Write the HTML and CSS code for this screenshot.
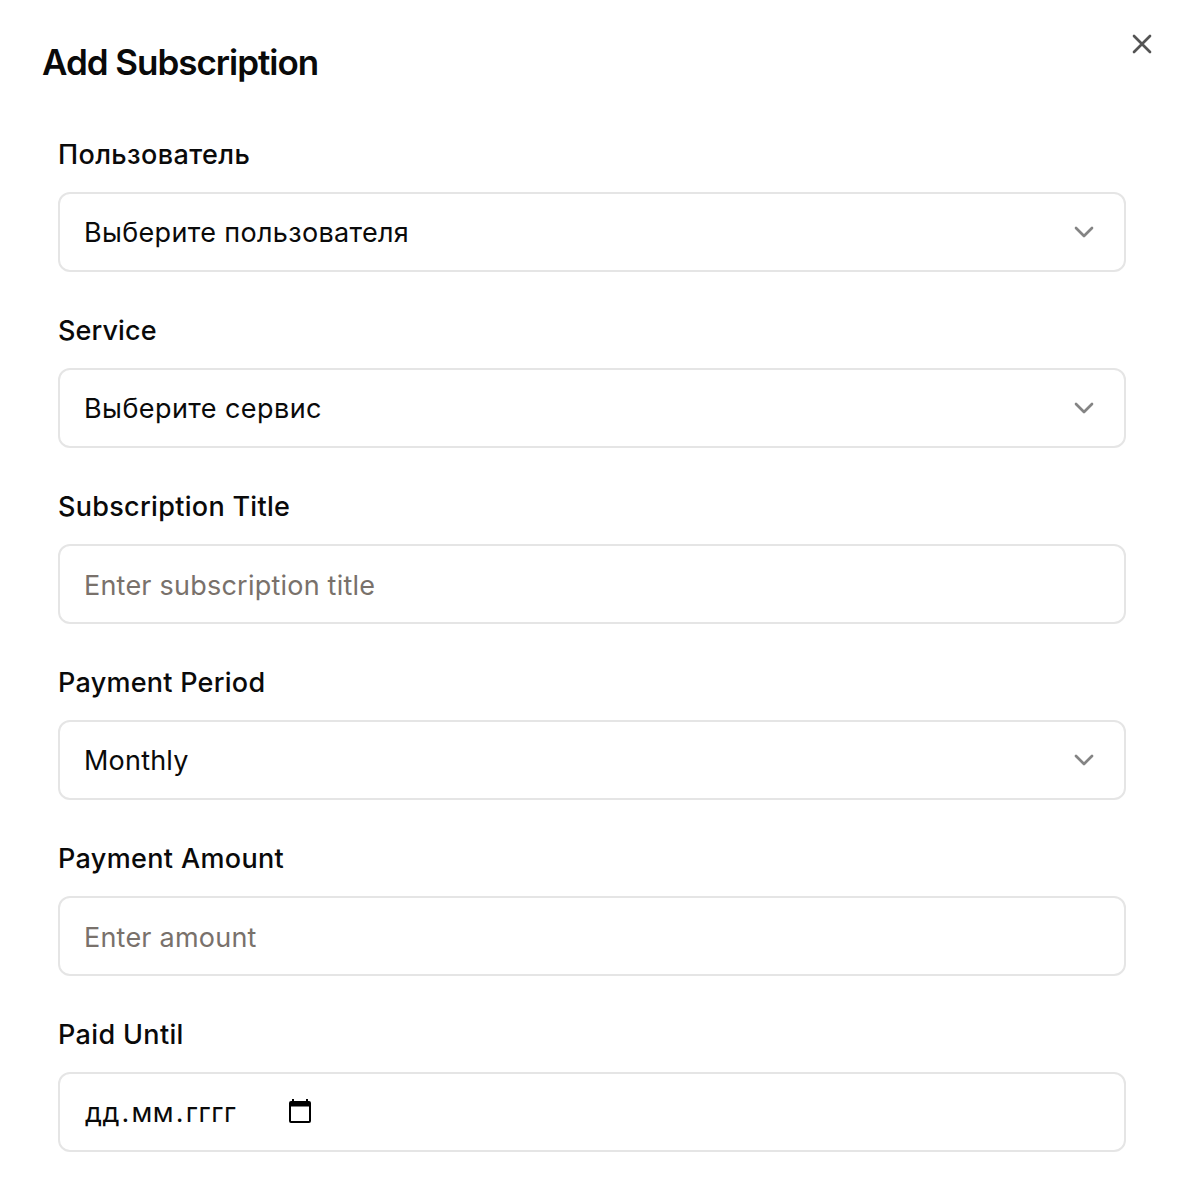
FILE: index.html
```html
<!DOCTYPE html>
<html lang="en">
<head>
<meta charset="utf-8">
<title>Add Subscription</title>
<link rel="stylesheet" href="styles.css">
</head>
<body>
<main class="dialog">
  <header class="dialog-header">
    <h1 class="title"><span>Add Subscription</span></h1>
    <button class="close" aria-label="Close">
      <svg width="32" height="32" viewBox="0 0 24 24" fill="none" stroke="currentColor" stroke-width="2" stroke-linecap="round" stroke-linejoin="round"><path d="M18 6 6 18M6 6l12 12"/></svg>
    </button>
  </header>
  <form class="form">
    <div class="field">
      <div class="label"><span class="label-user">Пользователь</span></div>
      <div class="control"><span class="value-user">Выберите пользователя</span>
        <svg class="chevron" width="32" height="32" viewBox="0 0 24 24"><path d="m6 9 6 6 6-6"/></svg></div>
    </div>
    <div class="field">
      <div class="label"><span class="label-service">Service</span></div>
      <div class="control"><span class="value-service">Выберите сервис</span>
        <svg class="chevron" width="32" height="32" viewBox="0 0 24 24"><path d="m6 9 6 6 6-6"/></svg></div>
    </div>
    <div class="field">
      <div class="label"><span class="label-title">Subscription Title</span></div>
      <div class="control input"><span class="placeholder">Enter subscription title</span></div>
    </div>
    <div class="field">
      <div class="label"><span class="label-period">Payment Period</span></div>
      <div class="control"><span class="value-period">Monthly</span>
        <svg class="chevron" width="32" height="32" viewBox="0 0 24 24"><path d="m6 9 6 6 6-6"/></svg></div>
    </div>
    <div class="field">
      <div class="label"><span>Payment Amount</span></div>
      <div class="control input"><span class="placeholder">Enter amount</span></div>
    </div>
    <div class="field">
      <div class="label"><span>Paid Until</span></div>
      <div class="control date"><span class="date-text">дд<span class="dot">.</span>мм<span class="dot">.</span>гггг</span>
        <svg class="calendar" width="22" height="24" viewBox="0 0 22 24"><path fill-rule="evenodd" d="M3 0h2v2h12V0h2v2h1a2 2 0 0 1 2 2v18a2 2 0 0 1-2 2H2a2 2 0 0 1-2-2V4a2 2 0 0 1 2-2h1zM2 7.5v14.5h18V7.5z"/></svg></div>
    </div>
    <div class="field">
      <div class="label label-next"><span>A</span></div>
    </div>
  </form>
</main>
</body>
</html>
```
FILE: styles.css
```css
* { box-sizing: border-box; }
body {
  margin: 0;
  height: 1200px;
  overflow: hidden;
  background: #fff;
  color: #0a0a0a;
  font-family: Inter, "Noto Sans", sans-serif;
  font-size: 27px;
  font-optical-sizing: none;
}
.dialog { padding: 28px 26px 0 42px; }
.dialog-header { display: flex; justify-content: space-between; align-items: flex-start; height: 104px; }
.title { margin: 16px 0 0; font-size: 35px; line-height: 36px; font-weight: 600; letter-spacing: -1.03px; }
.close { display: flex; padding: 0; border: 0; background: none; color: #545454; }
.form { display: flex; flex-direction: column; gap: 36px; padding: 0 32px 0 16px; }
.field { display: flex; flex-direction: column; }
.label { height: 60px; padding-top: 9px; line-height: 28px; font-weight: 500; letter-spacing: 0.35px; white-space: nowrap; }
.label-user { font-weight: 450; letter-spacing: 0.38px; }
.label-service { letter-spacing: 0.1px; }
.label-title { letter-spacing: 0.3px; }
.label-period { letter-spacing: 0.26px; }
.label-next { font-size: 28px; }
.control {
  display: flex;
  align-items: center;
  justify-content: space-between;
  height: 80px;
  padding: 0 24px;
  border: 2px solid #e5e5e5;
  border-radius: 12px;
  line-height: 40px;
  letter-spacing: 0.33px;
  white-space: nowrap;
}
.control > span { padding-top: 1px; }
.value-service { letter-spacing: 0.42px; }
.value-period { letter-spacing: 0.2px; }
.input { padding-top: 2px; }
.control > .placeholder { color: #79716b; letter-spacing: 0.22px; }
.chevron { fill: none; stroke: #848484; stroke-width: 2; stroke-linecap: round; stroke-linejoin: round; }
.date { justify-content: flex-start; }
.date-text { width: 205px; padding-left: 1px; letter-spacing: 0.5px; }
.dot { margin: 0 1.7px; }
.calendar { margin-bottom: 2px; fill: #000; }
```
